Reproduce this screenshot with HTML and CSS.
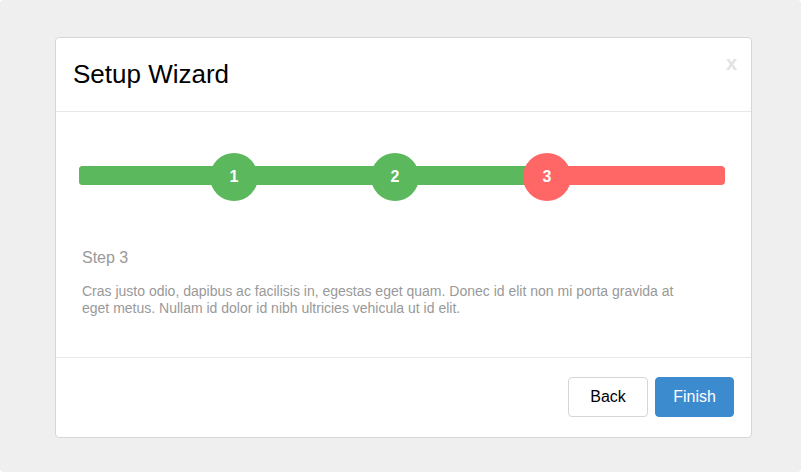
FILE: index.html
```html
<!DOCTYPE html>
<html lang="en">

<head>
    <meta charset="UTF-8">
    <meta name="viewport" content="width=device-width, initial-scale=1.0">
    <title>Setup Wizard</title>
    <link rel="stylesheet" href="styles.css">
</head>

<body>
    <div class="page">
        <div class="modal">
            <div class="modal-header">
                <h1 class="modal-title">Setup Wizard</h1>
                <span class="close">x</span>
            </div>
            <div class="modal-body">
                <div class="progress">
                    <div class="progress-done"></div>
                    <span class="step step-1">1</span>
                    <span class="step step-2">2</span>
                    <span class="step step-3 current">3</span>
                </div>
                <div class="step-content">
                    <h2 class="step-title">Step 3</h2>
                    <p>Cras justo odio, dapibus ac facilisis in, egestas eget quam. Donec id elit non mi porta gravida at eget metus. Nullam id dolor id nibh ultricies vehicula ut id elit.</p>
                </div>
            </div>
            <div class="modal-footer">
                <button class="btn">Back</button>
                <button class="btn btn-primary">Finish</button>
            </div>
        </div>
    </div>
</body>

</html>
```

FILE: styles.css
```css
    body {
        margin: 0;
        background: #fff;
        font-family: "Liberation Sans", Arial, sans-serif;
    }

    .page {
        width: 801px;
        height: 472px;
        box-sizing: border-box;
        background: #efefef;
        border-radius: 4px;
        padding: 37px 49px 0 55px;
    }

    .modal {
        width: 697px;
        height: 401px;
        box-sizing: border-box;
        background: #fff;
        border: 1px solid #d6d6d6;
        border-radius: 4px;
        display: flex;
        flex-direction: column;
    }

    .modal-header {
        height: 74px;
        box-sizing: border-box;
        border-bottom: 1px solid #e8e8e8;
        display: flex;
        align-items: center;
        justify-content: space-between;
        padding: 0 14px 0 17px;
    }

    .modal-title {
        margin: 0;
        font-size: 26px;
        font-weight: normal;
        color: #000;
    }

    .close {
        align-self: flex-start;
        margin-top: 14px;
        font-size: 20px;
        font-weight: bold;
        color: #e2e2e2;
    }

    .modal-body {
        flex: 1;
        border-bottom: 1px solid #e8e8e8;
        padding: 41px 26px 0 23px;
    }

    .progress {
        position: relative;
        height: 48px;
    }

    .progress::before {
        content: "";
        position: absolute;
        left: 0;
        right: 0;
        top: 13px;
        height: 19px;
        border-radius: 4px;
        background: #ff6666;
    }

    .progress-done {
        position: absolute;
        left: 0;
        top: 13px;
        width: 450px;
        height: 19px;
        border-radius: 4px 0 0 4px;
        background: #5cb85c;
    }

    .step {
        position: absolute;
        top: 0;
        width: 48px;
        height: 48px;
        border-radius: 50%;
        background: #5cb85c;
        color: #fff;
        font-size: 16px;
        font-weight: bold;
        line-height: 48px;
        text-align: center;
    }

    .step-1 {
        left: 131px;
    }

    .step-2 {
        left: 292px;
    }

    .step-3 {
        left: 444px;
    }

    .step.current {
        background: #ff6666;
    }

    .step-content {
        padding: 47px 0 0 3px;
        color: #999;
    }

    .step-title {
        margin: 0;
        font-size: 16px;
        font-weight: normal;
        line-height: 20px;
    }

    .step-content p {
        margin: 15px 0 0;
        font-size: 14px;
        line-height: 17px;
        width: 600px;
    }

    .modal-footer {
        height: 79px;
        box-sizing: border-box;
        display: flex;
        justify-content: flex-end;
        align-items: flex-start;
        gap: 7px;
        padding: 19px 17px 0 0;
    }

    .btn {
        width: 80px;
        height: 40px;
        border: 1px solid #d6d6d6;
        border-radius: 4px;
        background: #fff;
        color: #000;
        font-family: inherit;
        font-size: 16px;
    }

    .btn-primary {
        width: 79px;
        border-color: #3d8bcf;
        background: #3d8bcf;
        color: #fff;
    }
```
